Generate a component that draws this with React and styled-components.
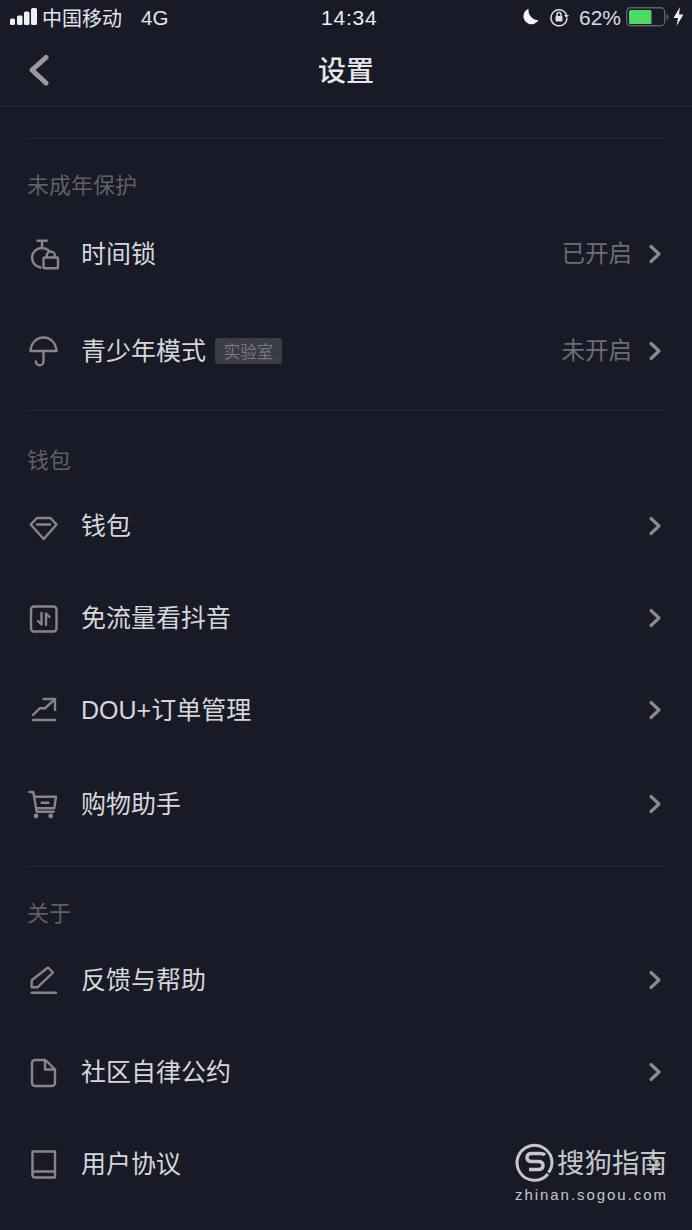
import React from "react";
import styled, { createGlobalStyle } from "styled-components";

const SANS = '"Liberation Sans", "Noto Sans CJK SC", sans-serif';
const Global = createGlobalStyle`
  html, body { margin: 0; padding: 0; background: #181a27; }
  * { box-sizing: border-box; }
`;
const Page = styled.div`
  position: relative;
  width: 692px;
  height: 1230px;
  overflow: hidden;
  background: #181a27;
  font-family: ${SANS};
  color: #dcdde0;
`;
const Header = styled.header`
  height: 107px;
  border-bottom: 1px solid #2a2c38;
`;
const StatusBar = styled.div`
  height: 33px;
  padding: 0 8px 0 10px;
  display: flex;
  align-items: center;
  justify-content: space-between;
  position: relative;
  color: #e4e5e8;
`;
const StatusSide = styled.div`
  display: flex;
  align-items: center;
`;
const Carrier = styled.span`
  font-size: 20px;
  margin-left: 5px;
  padding-top: 2px;
  width: 99px;
`;
const Net = styled.span`
  font-size: 20.500px;
  padding-top: 2px;
`;
const Clock = styled.span`
  position: absolute;
  left: 321px;
  top: 6px;
  font-size: 21px;
  letter-spacing: 0.8px;
  color: #eeeff1;
`;
const Percent = styled.span`
  font-size: 21px;
  margin: 0 5px 0 -1px;
  padding-top: 2px;
  color: #dcdde0;
`;
const NavBar = styled.div`
  height: 73px;
  padding-top: 4px;
  position: relative;
  display: flex;
  align-items: center;
  justify-content: center;
`;
const Back = styled.svg`
  position: absolute;
  left: 28px;
  top: 21px;
`;
const Title = styled.h1`
  margin: 0;
  font-size: 28px;
  font-weight: 500;
  line-height: 1;
  color: #e6e7e9;
`;
const Divider = styled.div`
  height: 1px;
  margin: ${(p) => p.$top || 0}px 27px 0;
  background: #272934;
`;
const Label = styled.div`
  margin: ${(p) => p.$top}px 27px ${(p) => p.$bottom}px;
  height: 24px;
  line-height: 24px;
  font-size: 22px;
  color: #5f6069;
`;
const Row = styled.div`
  height: ${(p) => p.$h || 92}px;
  padding: 0 27px 0 28px;
  display: flex;
  align-items: center;
`;
const IconBox = styled.span`
  width: 32px;
  height: 32px;
  margin-right: 21px;
  color: #85868d;
  display: flex;
  flex: none;
`;
const RowText = styled.span`
  font-size: 25px;
  line-height: 1;
  padding-top: 1px;
  color: #d6d7da;
`;
const Tag = styled.span`
  margin: 0 0 0 9px;
  height: 26px;
  width: 67px;
  border-radius: 3px;
  background: #3a3c46;
  color: #777880;
  font-size: 16.500px;
  display: flex;
  align-items: center;
  justify-content: center;
`;
const Value = styled.span`
  margin-left: auto;
  font-size: 23.500px;
  line-height: 1;
  padding-top: 3px;
  color: #6c6d75;
`;
const Chevron = styled.svg`
  margin-left: ${(p) => (p.$after ? "16px" : "auto")};
  margin-right: 3px;
  flex: none;
`;
const Watermark = styled.div`
  position: absolute;
  left: 515px;
  top: 1142px;
  width: 156px;
  color: #c6c7ca;
`;
const MarkTop = styled.div`
  display: flex;
  align-items: center;
  height: 40px;
`;
const MarkName = styled.span`
  font-size: 27.500px;
  line-height: 1;
  margin-left: 2px;
  padding-top: 3px;
  white-space: nowrap;
`;
const MarkUrl = styled.div`
  margin-top: 4px;
  font-size: 15px;
  line-height: 18px;
  letter-spacing: 1.950px;
  white-space: nowrap;
`;

const Svg = ({ children }) => (
  <svg width="32" height="32" viewBox="0 0 32 32" fill="none" stroke="currentColor" strokeWidth="2.400" strokeLinecap="round" strokeLinejoin="round">
    {children}
  </svg>
);
const icons = {
  lock: (
    <Svg>
      <path d="M9.500 2.700h9.300M14 3v6.500" />
      <path d="M12.500 29.500A9.800 9.800 0 0 1 13.700 10c2.500 0 5 .8 7 2.500" />
      <rect x="15.500" y="19.500" width="14.500" height="10.800" rx="1" />
      <path d="M18.800 19v-1.500a4 4 0 0 1 8 0V19" />
    </Svg>
  ),
  umbrella: (
    <Svg>
      <path d="M2.500 16C3 8 8.500 2.500 15.500 2.500S28 8 28.500 16Z" />
      <path d="M15.500 16v10.500a3.800 3.800 0 0 1-7.600 0" />
    </Svg>
  ),
  gem: (
    <Svg>
      <path d="M9 8h13.500l6 6.500L15.700 29 2.700 14.500Z" />
      <path d="M9 14.500h13" />
    </Svg>
  ),
  flow: (
    <Svg>
      <rect x="3" y="4.500" width="25.500" height="25" rx="3" />
      <path d="M13.500 11v11.500l-3.500-3.500" />
      <path d="M18 23V11.500l3.500 3.500" />
    </Svg>
  ),
  chart: (
    <Svg>
      <path d="M5 21l6.700-6.700H17L27 5" />
      <path d="M15.500 5H27v11" />
      <path d="M5 26h22" />
    </Svg>
  ),
  cart: (
    <Svg>
      <path d="M1.500 4h3.800l3.400 19.700h17" />
      <path d="M6.300 8.700H28l-1.700 11.600H8.200" />
      <path d="M13.700 14.700h6.600" />
      <circle cx="8" cy="28" r="1.200" />
      <circle cx="22.700" cy="28" r="1.200" />
    </Svg>
  ),
  pen: (
    <Svg>
      <path d="M3.700 23.300v-7L20 3.500l5 5L9.500 23.300Z" />
      <path d="M3.700 28.700H28" />
    </Svg>
  ),
  doc: (
    <Svg>
      <path d="M7 4h10.500L27 13.500V27a3 3 0 0 1-3 3H7a3 3 0 0 1-3-3V7a3 3 0 0 1 3-3Z" />
      <path d="M17 4.500v9h9.500" />
    </Svg>
  ),
  book: (
    <Svg>
      <path d="M4.500 3.500H27V29.500H7A2.500 2.500 0 0 1 4.500 27Z" />
      <path d="M4.500 26A2.500 2.500 0 0 1 7 23.500H27" />
    </Svg>
  ),
};

const ChevronIcon = ({ after }) => (
  <Chevron $after={after} width="14" height="20" viewBox="0 0 14 20" fill="none" stroke="#8a8b92" strokeWidth="3.200" strokeLinecap="round" strokeLinejoin="round">
    <path d="M3 2.500 11 10l-8 7.500" />
  </Chevron>
);

const Item = ({ icon, text, tag, value, h }) => (
  <Row $h={h}>
    <IconBox>{icons[icon]}</IconBox>
    <RowText>{text}</RowText>
    {tag && <Tag>{tag}</Tag>}
    {value && <Value>{value}</Value>}
    <ChevronIcon after={!!value} />
  </Row>
);

export default function App() {
  return (
    <Page>
      <Global />
      <Header>
        <StatusBar>
          <StatusSide>
            <svg width="27" height="17" viewBox="0 0 27 17" fill="#f0f0f2">
              <rect x="0" y="10.500" width="5" height="6.500" rx="1.500" />
              <rect x="7" y="7.500" width="5.500" height="9.500" rx="1.500" />
              <rect x="14" y="3.500" width="5.500" height="13.500" rx="1.500" />
              <rect x="21" y="0" width="6" height="17" rx="1.500" />
            </svg>
            <Carrier>中国移动</Carrier>
            <Net>4G</Net>
          </StatusSide>
          <Clock>14:34</Clock>
          <StatusSide>
            <svg width="17" height="17" viewBox="0 0 17 17" fill="#f4f4f6" style={{ marginRight: 10 }}>
              <path d="M6.500.8A8 8 0 1 0 16.500 12 10 10 0 0 1 6.500.8Z" />
            </svg>
            <svg width="20" height="20" viewBox="0 0 20 20" fill="none" stroke="#dedfe2" strokeWidth="1.500" style={{ marginRight: 11 }}>
              <path d="M17.500 8A8 8 0 1 0 18 11" />
              <path d="M15 8h5l-2.500 3Z" fill="#dedfe2" stroke="none" />
              <rect x="6.500" y="9" width="7" height="5.500" rx="1" fill="#dedfe2" stroke="none" />
              <path d="M8 9V7.500a2 2 0 0 1 4 0V9" />
            </svg>
            <Percent>62%</Percent>
            <svg width="43" height="20" viewBox="0 0 43 20" style={{ marginRight: 4 }}>
              <rect x=".7" y=".7" width="38" height="18" rx="4" fill="none" stroke="#5f6069" strokeWidth="1.400" />
              <rect x="3" y="3" width="22.500" height="14" rx="1.500" fill="#4cd964" />
              <path d="M40.500 7c1.500.5 2 1.500 2 3s-.5 2.500-2 3Z" fill="#5f6069" />
            </svg>
            <svg width="11" height="19" viewBox="0 0 11 19" fill="#eceded">
              <path d="M7 0 .5 11H5L3.500 19 10.500 7.500H6Z" />
            </svg>
          </StatusSide>
        </StatusBar>
        <NavBar>
          <Back width="22" height="34" viewBox="0 0 22 34" fill="none" stroke="#9a9ba0" strokeWidth="5" strokeLinecap="round" strokeLinejoin="round">
            <path d="M18 3.500 4 16l14 13" />
          </Back>
          <Title>设置</Title>
        </NavBar>
      </Header>
      <Divider $top={31} />
      <Label $top={35} $bottom={7}>未成年保护</Label>
      <Item icon="lock" text="时间锁" value="已开启" h={97} />
      <Item icon="umbrella" text="青少年模式" tag="实验室" value="未开启" h={97} />
      <Divider $top={11} />
      <Label $top={38} $bottom={7}>钱包</Label>
      <Item icon="gem" text="钱包" />
      <Item icon="flow" text="免流量看抖音" />
      <Item icon="chart" text="DOU+订单管理" />
      <Item icon="cart" text="购物助手" h={96} />
      <Divider $top={14} />
      <Label $top={35} $bottom={8}>关于</Label>
      <Item icon="pen" text="反馈与帮助" />
      <Item icon="doc" text="社区自律公约" />
      <Item icon="book" text="用户协议" />
      <Watermark>
        <MarkTop>
          <svg width="40" height="40" viewBox="0 0 40 40" fill="none" stroke="#c6c7ca" strokeWidth="3">
            <path d="M33 32A17.500 17.500 0 1 1 37 20c0 4-1.500 8-3.500 10.500" />
            <path d="M30 13c-1-1-3-1.500-5-1.500h-8c-3 0-5 1.500-5 4s2 4 5 4h6c3 0 5 1.500 5 4s-2 4-5 4h-9" strokeWidth="3.500" />
          </svg>
          <MarkName>搜狗指南</MarkName>
        </MarkTop>
        <MarkUrl>zhinan.sogou.com</MarkUrl>
      </Watermark>
    </Page>
  );
}
